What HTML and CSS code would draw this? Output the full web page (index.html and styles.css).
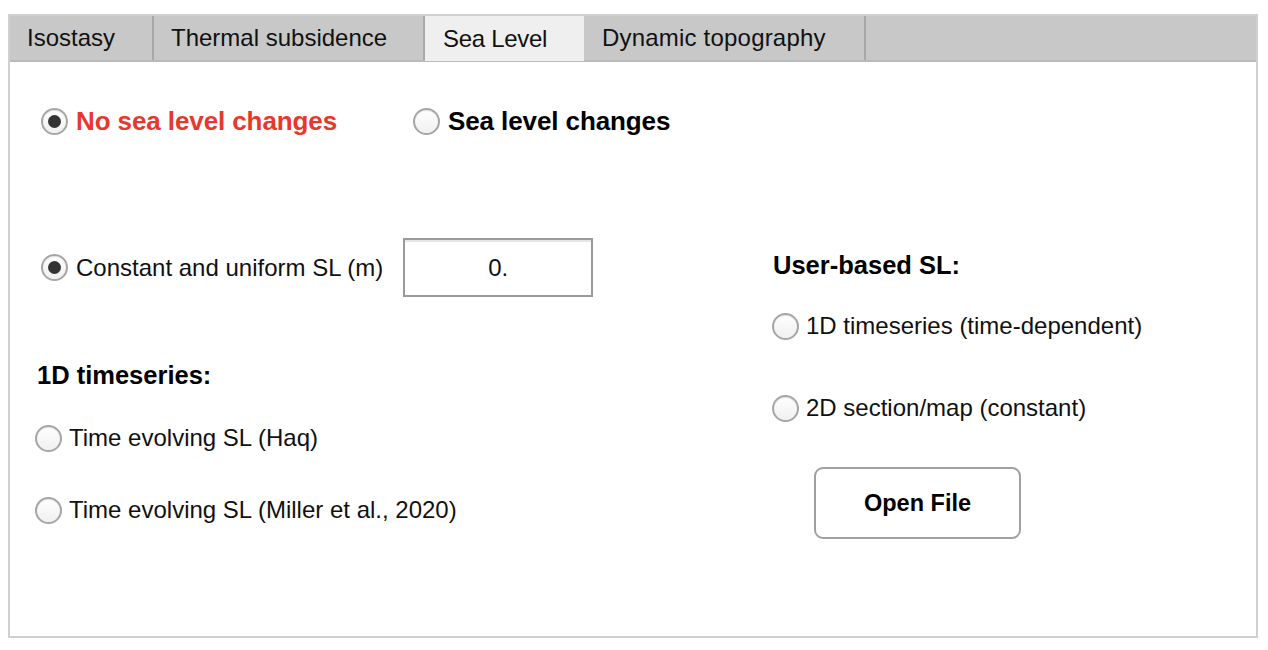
FILE: index.html
```html
<!DOCTYPE html>
<html>
<head>
<meta charset="utf-8">
<link rel="stylesheet" href="styles.css">
</head>
<body>
<div class="panel">
  <div class="tabbar">
    <div class="tab tab-iso">Isostasy</div>
    <div class="tab tab-thermal">Thermal subsidence</div>
    <div class="tab tab-sea active">Sea Level</div>
    <div class="tab tab-dyn">Dynamic topography</div>
  </div>
  <div class="content">
    <div class="mode-row">
      <label class="mode-item mode-first"><span class="radio checked"></span><span class="mode-label red">No sea level changes</span></label>
      <label class="mode-item"><span class="radio"></span><span class="mode-label">Sea level changes</span></label>
    </div>
    <div class="columns">
      <div class="col-left">
        <div class="const-row">
          <span class="radio checked"></span>
          <span class="opt-label">Constant and uniform SL (m)</span>
          <div class="num-field">0.</div>
        </div>
        <div class="heading heading-left">1D timeseries:</div>
        <div class="opt opt-haq"><span class="radio"></span><span class="opt-label">Time evolving SL (Haq)</span></div>
        <div class="opt opt-miller"><span class="radio"></span><span class="opt-label">Time evolving SL (Miller et al., 2020)</span></div>
      </div>
      <div class="col-right">
        <div class="heading heading-right">User-based SL:</div>
        <div class="opt opt-1d"><span class="radio"></span><span class="opt-label">1D timeseries (time-dependent)</span></div>
        <div class="opt opt-2d"><span class="radio"></span><span class="opt-label">2D section/map (constant)</span></div>
        <button class="open-btn">Open File</button>
      </div>
    </div>
  </div>
</div>
</body>
</html>
```
FILE: styles.css
```css
* { box-sizing: border-box; }
html, body { margin: 0; padding: 0; background: #ffffff; }
body {
  font-family: "Liberation Sans", Arial, Helvetica, sans-serif;
  color: #000;
}
.panel {
  margin: 14px 0 0 8px;
  width: 1250px;
  height: 624px;
  border: 2px solid #d0d0d0;
  background: #fff;
}
.tabbar {
  display: flex;
  height: 46px;
  background: #c8c8c8;
  border-bottom: 2px solid #bababa;
}
.tab {
  height: 44px;
  display: flex;
  align-items: center;
  padding-left: 17px;
  font-size: 24px;
  color: #111;
  position: relative;
  white-space: nowrap;
}
.tab::after {
  content: "";
  position: absolute;
  right: 0;
  top: 0;
  width: 2px;
  height: 44px;
  background: #a8a8a8;
}
.tab-iso { width: 144px; }
.tab-thermal { width: 271px; }
.tab-sea { width: 159px; padding-left: 18px; letter-spacing: -0.3px; }
.tab-dyn { width: 282px; padding-left: 18px; letter-spacing: 0.2px; }
.tab.active {
  background: #efefef;
  height: 45px;
}
.tab.active::after { display: none; }

.content {
  position: relative;
}
.mode-row {
  display: flex;
  align-items: center;
  height: 40px;
  margin-top: 39px;
  padding-left: 31px;
}
.mode-item {
  display: flex;
  align-items: center;
  gap: 8px;
}
.mode-first { width: 372px; }
.mode-label {
  font-size: 26px;
  font-weight: bold;
  color: #000;
  letter-spacing: -0.1px;
}
.mode-label.red { color: #e8382b; }

.radio {
  flex: none;
  position: relative;
  width: 27px;
  height: 27px;
  border-radius: 50%;
  border: 2px solid #a6a6a6;
  background: linear-gradient(#ffffff, #f0f0f0);
  box-shadow: inset 0 1px 1px rgba(0,0,0,0.1);
}
.radio.checked::after {
  content: "";
  position: absolute;
  left: 50%;
  top: 50%;
  width: 13px;
  height: 13px;
  margin: -6.5px 0 0 -6.5px;
  border-radius: 50%;
  background: #333;
}

.columns {
  display: flex;
  margin-top: 89px;
}
.col-left {
  width: 761px;
  display: flex;
  flex-direction: column;
}
.col-right {
  display: flex;
  flex-direction: column;
}
.const-row {
  display: flex;
  align-items: center;
  gap: 8px;
  height: 59px;
  margin-top: 8px;
  padding-left: 31px;
}
.opt-label {
  font-size: 24px;
  color: #111;
  white-space: nowrap;
}
.num-field {
  width: 190px;
  height: 59px;
  margin-left: 12px;
  border: 2px solid #9a9a9a;
  box-shadow: inset 0 2px 0 #e6e6e6;
  display: flex;
  align-items: center;
  justify-content: center;
  font-size: 24px;
  color: #111;
}
.heading {
  height: 30px;
  display: flex;
  align-items: center;
  font-size: 25.5px;
  font-weight: bold;
  color: #000;
}
.heading-left { margin-top: 63px; padding-left: 27px; }
.opt {
  display: flex;
  align-items: center;
  gap: 7px;
  height: 30px;
}
.opt-haq { margin-top: 33px; padding-left: 25px; }
.opt-miller { margin-top: 42px; padding-left: 25px; }

.heading-right { margin-top: 20px; padding-left: 2px; }
.opt-1d { margin-top: 31px; padding-left: 1px; gap: 7px; }
.opt-2d { margin-top: 52px; padding-left: 1px; gap: 7px; }
.open-btn {
  margin-top: 44px;
  margin-left: 43px;
  width: 207px;
  height: 72px;
  border: 2px solid #a0a0a0;
  border-radius: 9px;
  background: #fff;
  font-family: "Liberation Sans", Arial, Helvetica, sans-serif;
  font-size: 23.5px;
  font-weight: bold;
  color: #000;
  padding: 0;
}
```
